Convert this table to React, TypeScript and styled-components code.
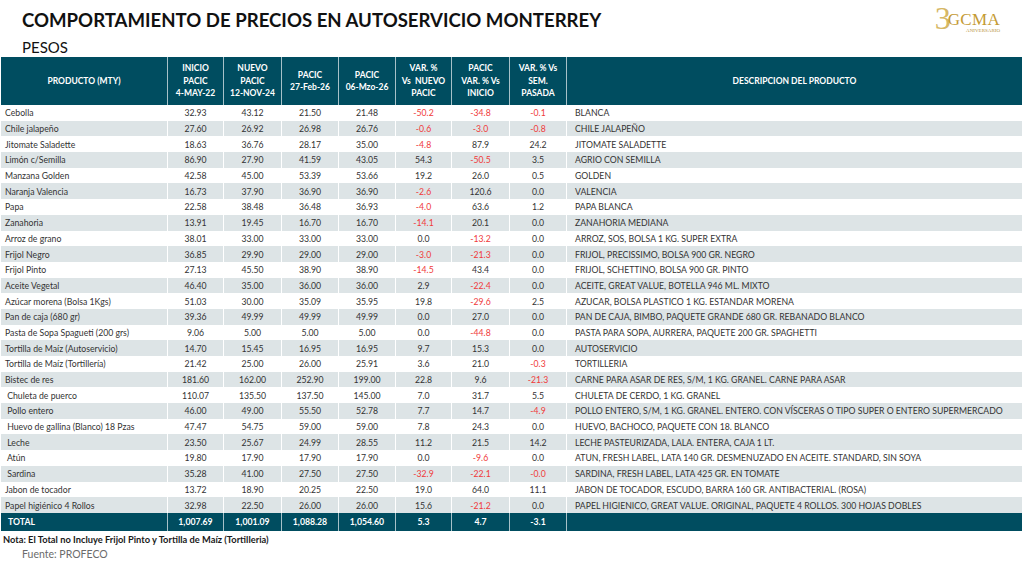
import React from "react"
import styled, { createGlobalStyle } from "styled-components"

const GlobalStyle = createGlobalStyle`
  html, body {
    margin: 0;
    padding: 0;
    background: #ffffff;
  }
  body {
    font-family: Lato, "Liberation Sans", sans-serif;
    color: #333333;
  }
`

const COLS = "166px 56px 58px 57px 57px 56px 58px 57px 1fr"
const TEAL = "#004d60"
const RED = "#f03a3a"

type Row = [string, string, string, string, string, string, string, string, string]

const rows: Row[] = [
  ["Cebolla", "32.93", "43.12", "21.50", "21.48", "-50.2", "-34.8", "-0.1", "BLANCA"],
  ["Chile jalapeño", "27.60", "26.92", "26.98", "26.76", "-0.6", "-3.0", "-0.8", "CHILE JALAPEÑO"],
  ["Jitomate Saladette", "18.63", "36.76", "28.17", "35.00", "-4.8", "87.9", "24.2", "JITOMATE SALADETTE"],
  ["Limón c/Semilla", "86.90", "27.90", "41.59", "43.05", "54.3", "-50.5", "3.5", "AGRIO CON SEMILLA"],
  ["Manzana Golden", "42.58", "45.00", "53.39", "53.66", "19.2", "26.0", "0.5", "GOLDEN"],
  ["Naranja Valencia", "16.73", "37.90", "36.90", "36.90", "-2.6", "120.6", "0.0", "VALENCIA"],
  ["Papa", "22.58", "38.48", "36.48", "36.93", "-4.0", "63.6", "1.2", "PAPA BLANCA"],
  ["Zanahoria", "13.91", "19.45", "16.70", "16.70", "-14.1", "20.1", "0.0", "ZANAHORIA MEDIANA"],
  ["Arroz de grano", "38.01", "33.00", "33.00", "33.00", "0.0", "-13.2", "0.0", "ARROZ, SOS, BOLSA 1 KG. SUPER EXTRA"],
  ["Frijol Negro", "36.85", "29.90", "29.00", "29.00", "-3.0", "-21.3", "0.0", "FRIJOL, PRECISSIMO, BOLSA 900 GR. NEGRO"],
  ["Frijol Pinto", "27.13", "45.50", "38.90", "38.90", "-14.5", "43.4", "0.0", "FRIJOL, SCHETTINO, BOLSA 900 GR. PINTO"],
  ["Aceite Vegetal", "46.40", "35.00", "36.00", "36.00", "2.9", "-22.4", "0.0", "ACEITE, GREAT VALUE, BOTELLA 946 ML. MIXTO"],
  ["Azúcar morena (Bolsa 1Kgs)", "51.03", "30.00", "35.09", "35.95", "19.8", "-29.6", "2.5", "AZUCAR, BOLSA PLASTICO 1 KG. ESTANDAR MORENA"],
  ["Pan de caja (680 gr)", "39.36", "49.99", "49.99", "49.99", "0.0", "27.0", "0.0", "PAN DE CAJA, BIMBO, PAQUETE GRANDE 680 GR. REBANADO BLANCO"],
  ["Pasta de Sopa Spagueti (200 grs)", "9.06", "5.00", "5.00", "5.00", "0.0", "-44.8", "0.0", "PASTA PARA SOPA, AURRERA, PAQUETE 200 GR. SPAGHETTI"],
  ["Tortilla de Maíz (Autoservicio)", "14.70", "15.45", "16.95", "16.95", "9.7", "15.3", "0.0", "AUTOSERVICIO"],
  ["Tortilla de Maíz (Tortillería)", "21.42", "25.00", "26.00", "25.91", "3.6", "21.0", "-0.3", "TORTILLERIA"],
  ["Bistec de res", "181.60", "162.00", "252.90", "199.00", "22.8", "9.6", "-21.3", "CARNE PARA ASAR DE RES, S/M, 1 KG. GRANEL. CARNE PARA ASAR"],
  [" Chuleta de puerco", "110.07", "135.50", "137.50", "145.00", "7.0", "31.7", "5.5", "CHULETA DE CERDO, 1 KG. GRANEL"],
  [" Pollo entero", "46.00", "49.00", "55.50", "52.78", "7.7", "14.7", "-4.9", "POLLO ENTERO, S/M, 1 KG. GRANEL. ENTERO. CON VÍSCERAS O TIPO SUPER O ENTERO SUPERMERCADO"],
  [" Huevo de gallina (Blanco) 18 Pzas", "47.47", "54.75", "59.00", "59.00", "7.8", "24.3", "0.0", "HUEVO, BACHOCO, PAQUETE CON 18. BLANCO"],
  [" Leche", "23.50", "25.67", "24.99", "28.55", "11.2", "21.5", "14.2", "LECHE PASTEURIZADA, LALA. ENTERA, CAJA 1 LT."],
  [" Atún", "19.80", "17.90", "17.90", "17.90", "0.0", "-9.6", "0.0", "ATUN, FRESH LABEL, LATA 140 GR. DESMENUZADO EN ACEITE. STANDARD, SIN SOYA"],
  [" Sardina", "35.28", "41.00", "27.50", "27.50", "-32.9", "-22.1", "-0.0", "SARDINA, FRESH LABEL, LATA 425 GR. EN TOMATE"],
  ["Jabon de tocador", "13.72", "18.90", "20.25", "22.50", "19.0", "64.0", "11.1", "JABON DE TOCADOR, ESCUDO, BARRA 160 GR. ANTIBACTERIAL. (ROSA)"],
  ["Papel higiénico 4 Rollos", "32.98", "22.50", "26.00", "26.00", "15.6", "-21.2", "0.0", "PAPEL HIGIENICO, GREAT VALUE. ORIGINAL, PAQUETE 4 ROLLOS. 300 HOJAS DOBLES"]
]

const headers: string[][] = [
  ["PRODUCTO (MTY)"],
  ["INICIO", "PACIC", "4-MAY-22"],
  ["NUEVO", "PACIC", "12-NOV-24"],
  ["PACIC", "27-Feb-26"],
  ["PACIC", "06-Mzo-26"],
  ["VAR. %", "Vs  NUEVO", "PACIC"],
  ["PACIC", "VAR. % Vs", "INICIO"],
  ["VAR. % Vs", "SEM.", "PASADA"],
  ["DESCRIPCION DEL PRODUCTO"]
]

const totals = ["TOTAL", "1,007.69", "1,001.09", "1,088.28", "1,054.60", "5.3", "4.7", "-3.1", ""]

const Page = styled.div`
  width: 1024px;
  height: 563px;
  overflow: hidden;
  display: flex;
  flex-direction: column;
`

const TopBar = styled.div`
  height: 57px;
  display: flex;
  justify-content: space-between;
  padding: 0 22px 0 22px;
`

const TitleBlock = styled.div`
  display: flex;
  flex-direction: column;
  padding-top: 8px;
`

const Title = styled.div`
  font-size: 18.6px;
  font-weight: 700;
  color: #111111;
  line-height: 24px;
`

const Subtitle = styled.div`
  font-size: 15px;
  color: #111111;
  line-height: 18px;
  margin-top: 6px;
`

const Logo = styled.div`
  display: flex;
  align-items: flex-start;
  padding-top: 0;
  margin-right: 2px;
`

const LogoThree = styled.span`
  font-family: "Liberation Serif", "DejaVu Serif", serif;
  font-size: 32px;
  font-weight: 400;
  line-height: 36px;
  margin-right: -3px;
  color: #d6b765;
`

const LogoWord = styled.div`
  display: flex;
  flex-direction: column;
  align-items: flex-end;
  padding-top: 13px;
`

const LogoText = styled.span`
  font-family: "Liberation Serif", "DejaVu Serif", serif;
  font-size: 17px;
  line-height: 14px;
  letter-spacing: 0.3px;
  color: #c49a34;
`

const LogoSub = styled.span`
  font-family: "Liberation Serif", serif;
  font-size: 5px;
  line-height: 7px;
  color: #b8923a;
`

const Table = styled.div`
  margin: 0 2px 0 1px;
  display: flex;
  flex-direction: column;
`

const HeaderRow = styled.div`
  display: grid;
  grid-template-columns: ${COLS};
  height: 48px;
  background: ${TEAL};
`

const HeaderCell = styled.div<{ $first?: boolean }>`
  display: flex;
  flex-direction: column;
  align-items: center;
  justify-content: center;
  color: #ffffff;
  font-size: 8.5px;
  font-weight: 700;
  line-height: 12.5px;
  text-align: center;
  white-space: pre;
  border-left: ${(p) => (p.$first ? "none" : "1.5px solid #a7c1c8")};
`

const DataRow = styled.div<{ $alt: boolean }>`
  display: grid;
  grid-template-columns: ${COLS};
  height: 15.7px;
  background: ${(p) => (p.$alt ? "#dde4e6" : "#ffffff")};
`

const Cell = styled.div<{ $left?: boolean; $red?: boolean; $first?: boolean; $desc?: boolean }>`
  display: flex;
  align-items: center;
  justify-content: ${(p) => (p.$left ? "flex-start" : "center")};
  padding-left: ${(p) => (p.$desc ? "8px" : p.$left ? "4px" : "0")};
  font-size: 8.7px;
  color: ${(p) => (p.$red ? RED : "#333333")};
  white-space: pre;
  overflow: hidden;
  border-left: ${(p) => (p.$first ? "none" : "1.5px solid #ffffff")};
`

const TotalRow = styled.div`
  display: grid;
  grid-template-columns: ${COLS};
  height: 18px;
  background: ${TEAL};
`

const TotalCell = styled.div<{ $left?: boolean; $first?: boolean }>`
  display: flex;
  align-items: center;
  justify-content: ${(p) => (p.$left ? "flex-start" : "center")};
  padding-left: ${(p) => (p.$left ? "7px" : "0")};
  color: #ffffff;
  font-size: 8.7px;
  font-weight: 700;
  border-left: ${(p) => (p.$first ? "none" : "1.5px solid #a7c1c8")};
`

const Note = styled.div`
  margin: 3px 0 0 3px;
  font-size: 9.3px;
  font-weight: 700;
  color: #1a1a1a;
  line-height: 12px;
`

const Source = styled.div`
  margin: 2px 0 0 22px;
  font-size: 10.5px;
  color: #6b6b6b;
  line-height: 12px;
`

export default function App() {
  return (
    <>
      <GlobalStyle />
      <Page>
        <TopBar>
          <TitleBlock>
            <Title>COMPORTAMIENTO DE PRECIOS EN AUTOSERVICIO MONTERREY</Title>
            <Subtitle>PESOS</Subtitle>
          </TitleBlock>
          <Logo>
            <LogoThree>3</LogoThree>
            <LogoWord>
              <LogoText>GCMA</LogoText>
              <LogoSub>ANIVERSARIO</LogoSub>
            </LogoWord>
          </Logo>
        </TopBar>
        <Table>
          <HeaderRow>
            {headers.map((lines, i) => (
              <HeaderCell key={i} $first={i === 0}>
                {lines.map((l, j) => (
                  <span key={j}>{l}</span>
                ))}
              </HeaderCell>
            ))}
          </HeaderRow>
          {rows.map((r, i) => (
            <DataRow key={i} $alt={i % 2 === 1}>
              {r.map((v, j) => (
                <Cell
                  key={j}
                  $first={j === 0}
                  $left={j === 0 || j === 8}
                  $desc={j === 8}
                  $red={j >= 5 && j <= 7 && v.startsWith("-")}
                >
                  {v}
                </Cell>
              ))}
            </DataRow>
          ))}
          <TotalRow>
            {totals.map((v, j) => (
              <TotalCell key={j} $first={j === 0} $left={j === 0}>
                {v}
              </TotalCell>
            ))}
          </TotalRow>
        </Table>
        <Note>Nota: El Total no Incluye Frijol Pinto y Tortilla de Maíz (Tortilleria)</Note>
        <Source>Fuente: PROFECO</Source>
      </Page>
    </>
  )
}
